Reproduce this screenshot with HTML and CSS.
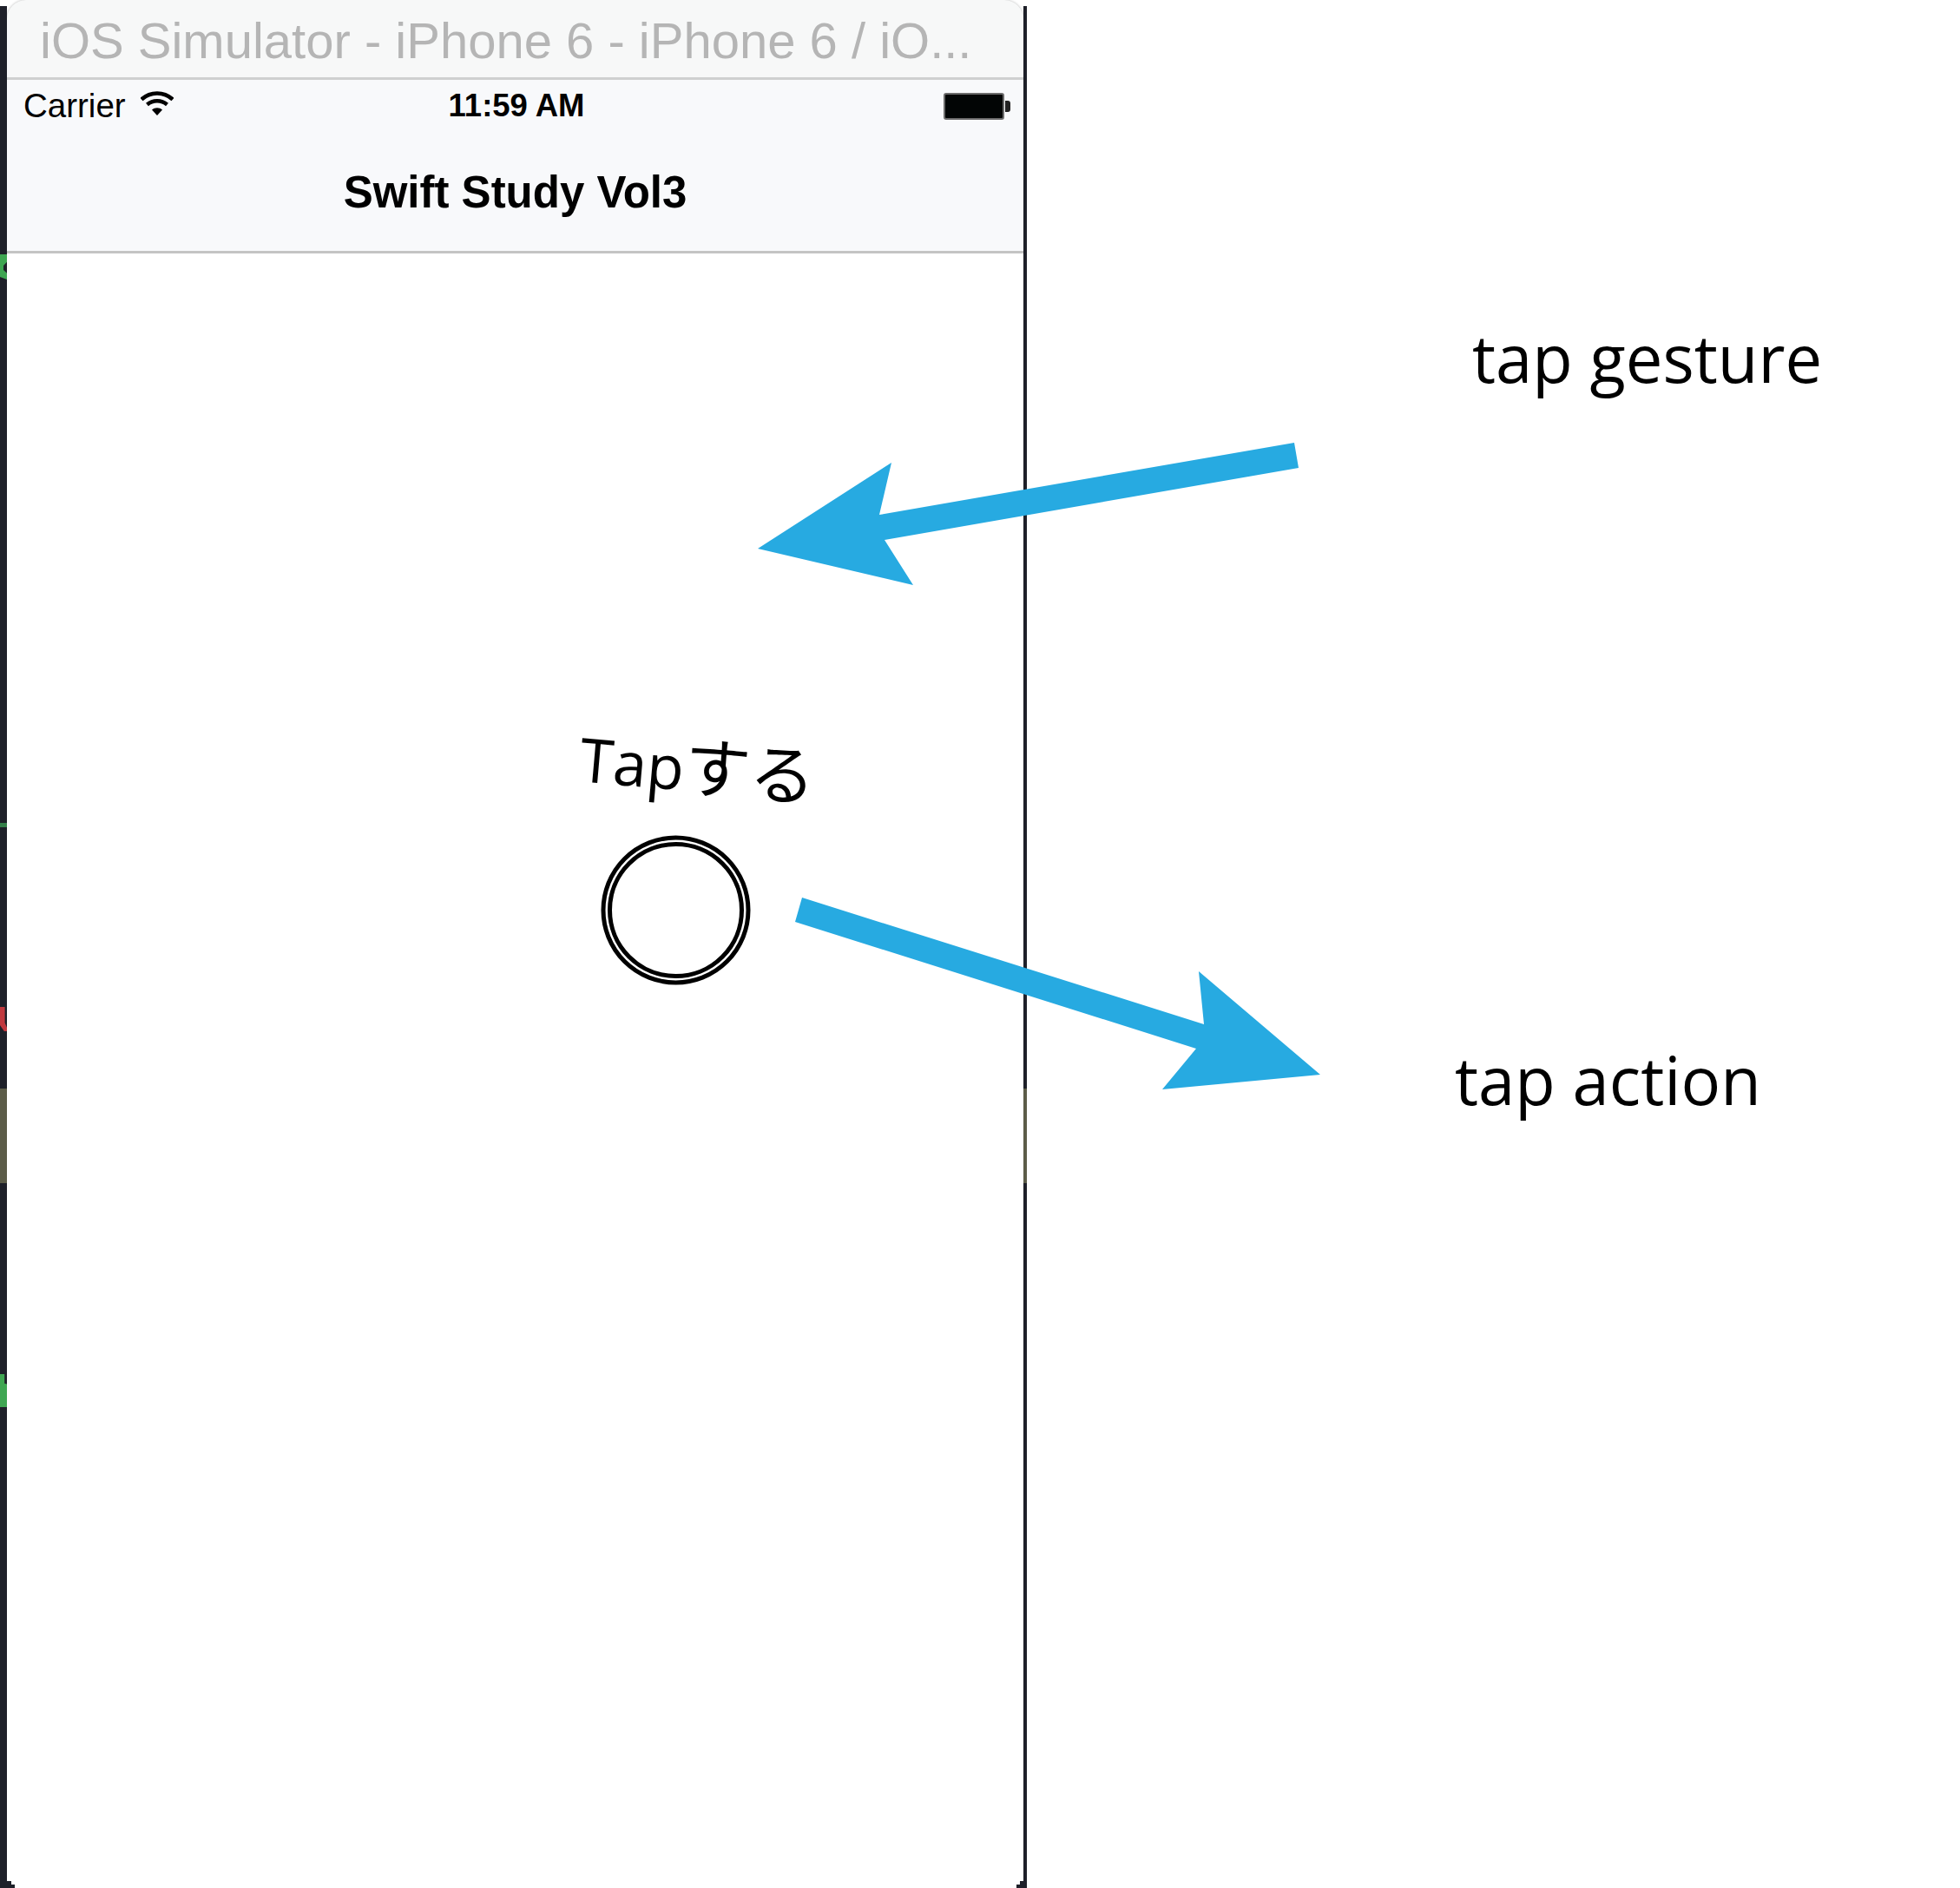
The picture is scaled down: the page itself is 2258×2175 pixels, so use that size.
FILE: index.html
```html
<!DOCTYPE html>
<html>

<head>
  <meta charset="utf-8">
  <title>Swift Study Vol3</title>
  <link rel="stylesheet" href="styles.css">
</head>

<body>
  <div class="stage">
    <div class="gutter">
      <span class="mark mark-green-a"></span>
      <span class="mark mark-green-b"></span>
      <span class="mark mark-red"></span>
      <span class="mark mark-olive"></span>
      <span class="mark mark-green-c"></span>
      <span class="stair stair-left-a"></span>
      <span class="stair stair-left-b"></span>
    </div>

    <div class="device">
      <div class="titlebar">iOS Simulator - iPhone 6 - iPhone 6 / iO...</div>
      <div class="statusbar">
        <div class="carrier">
          <span>Carrier</span>
          <svg class="wifi" width="38" height="28" viewBox="0 0 38 28">
            <path d="M1 9.5C11 0 27 0 37 9.5" fill="none" stroke="#000" stroke-width="4.5"/>
            <path d="M7.5 15.5C14 9.8 24 9.8 30.500 15.500" fill="none" stroke="#000" stroke-width="4.5"/>
            <path d="M13 21.500C16.500 18.500 21.500 18.500 25 21.500L19 28Z" fill="#000"/>
          </svg>
        </div>
        <div class="clock">11:59 AM</div>
        <div class="battery-wrap">
          <div class="battery"><span class="battery-nub"></span></div>
        </div>
      </div>
      <div class="navbar">Swift Study Vol3</div>
      <div class="content"></div>
    </div>

    <div class="edge">
      <span class="mark mark-olive"></span>
      <span class="stair stair-right-a"></span>
      <span class="stair stair-right-b"></span>
    </div>

    <div class="blank"></div>

    <!-- annotations drawn on top of the screenshot -->
    <svg class="overlay" width="2258" height="2175" viewBox="0 0 2258 2175">
      <polygon fill="#27aae1" points="1491,510 1496,539 1019,622 1052,674 873,632 1027,533 1013,593"/>
      <polygon fill="#27aae1" points="924,1034 916,1062 1378,1208 1339,1255 1521,1238 1381,1119 1387,1180"/>
      <circle cx="778.500" cy="1048.500" r="83.500" fill="none" stroke="#000" stroke-width="5"/>
      <circle cx="778.500" cy="1048.500" r="76" fill="none" stroke="#000" stroke-width="5"/>
    </svg>
    <div class="note note-tap">Tap<span class="note-kana">する</span></div>
    <div class="note note-gesture">tap gesture</div>
    <div class="note note-action">tap action</div>
  </div>
</body>

</html>
```

FILE: styles.css
```css
* {
  box-sizing: border-box;
}

body {
  margin: 0;
  background: #fff;
  font-family: "Liberation Sans", Arial, sans-serif;
}

.stage {
  position: relative;
  display: flex;
  width: 2258px;
  height: 2175px;
  overflow: hidden;
}

.gutter {
  position: relative;
  z-index: 1;
  width: 8px;
  margin-top: 7px;
  background: #1e2029;
}

.edge {
  position: relative;
  width: 4px;
  margin-top: 7px;
  background: #1e2029;
}

/* bits of the window behind the simulator, offsets are from the 7px top margin */
.mark {
  position: absolute;
  left: 0;
  width: 100%;
}

.mark-green-a {
  top: 286px;
  height: 29px;
  background: #3fa652;
  clip-path: polygon(0 0, 100% 0, 100% 30%, 50% 45%, 50% 62%, 100% 75%, 100% 100%, 0 90%);
}

.mark-green-b {
  top: 941px;
  height: 5px;
  background: #35804a;
}

.mark-red {
  top: 1153px;
  height: 28px;
  background: #c0393f;
  clip-path: polygon(0 0, 70% 0, 70% 65%, 100% 85%, 100% 100%, 60% 100%, 0 75%);
}

.mark-olive {
  top: 1247px;
  height: 109px;
  background: #5c5c48;
}

.mark-green-c {
  top: 1576px;
  height: 38px;
  background: #3fa652;
  clip-path: polygon(0 0, 65% 0, 65% 28%, 100% 30%, 100% 100%, 0 100%);
}

.stair {
  position: absolute;
  height: 8px;
  background: #1e2029;
}

.stair-left-a {
  top: 2160px;
  left: 8px;
  width: 5px;
}

.stair-left-b {
  top: 2164px;
  left: 13px;
  width: 4px;
  height: 4px;
}

.stair-right-a {
  top: 2160px;
  right: 4px;
  width: 4px;
}

.stair-right-b {
  top: 2164px;
  right: 8px;
  width: 4px;
  height: 4px;
}

.device {
  position: relative;
  width: 1171px;
  display: flex;
  flex-direction: column;
  background: #fff;
}

.titlebar {
  height: 92px;
  padding: 17px 0 0 38px;
  background: #f7f8f8;
  border-bottom: 3px solid #cfd0d0;
  border-radius: 22px 22px 0 0;
  box-shadow: 0 0 3px #b5b5b5;
  color: #b5b5b5;
  font-size: 58px;
  line-height: 60px;
  white-space: nowrap;
}

.statusbar {
  display: grid;
  grid-template-columns: 1fr auto 1fr;
  align-items: center;
  height: 60px;
  padding: 0 14px 0 19px;
  background: #f8f9fb;
  color: #000;
  font-size: 38.500px;
}

.carrier {
  display: flex;
  align-items: center;
  gap: 17px;
}

.wifi {
  margin-top: -6px;
}

.clock {
  margin-right: 2px;
  font-size: 36.500px;
  font-weight: bold;
}

.battery-wrap {
  display: flex;
  justify-content: flex-end;
  padding-right: 8px;
}

.battery {
  position: relative;
  width: 70px;
  height: 31px;
  border: 2px solid #6b6b6b;
  border-radius: 3px;
  background: #020505;
}

.battery-nub {
  position: absolute;
  top: 7px;
  right: -9px;
  width: 6px;
  height: 13px;
  background: #222;
  border-radius: 0 3px 3px 0;
}

.navbar {
  height: 140px;
  padding-top: 40px;
  background: #f8f9fb;
  border-bottom: 3px solid #c4c4c4;
  color: #000;
  font-size: 51px;
  font-weight: bold;
  line-height: 60px;
  text-align: center;
}

.content {
  flex: 1;
  background: #fff;
}

.blank {
  flex: 1;
}

.overlay {
  position: absolute;
  top: 0;
  left: 0;
}

.note {
  position: absolute;
  color: #000;
  font-family: "Open Sans", "Noto Sans CJK JP", sans-serif;
  font-size: 76px;
  line-height: 90px;
  white-space: nowrap;
}

.note-tap {
  top: 838px;
  left: 668px;
  font-size: 70px;
  transform: rotate(5deg);
}

.note-kana {
  font-size: 76px;
}

.note-gesture {
  top: 367px;
  left: 1696px;
}

.note-action {
  top: 1199px;
  left: 1676px;
}
```
